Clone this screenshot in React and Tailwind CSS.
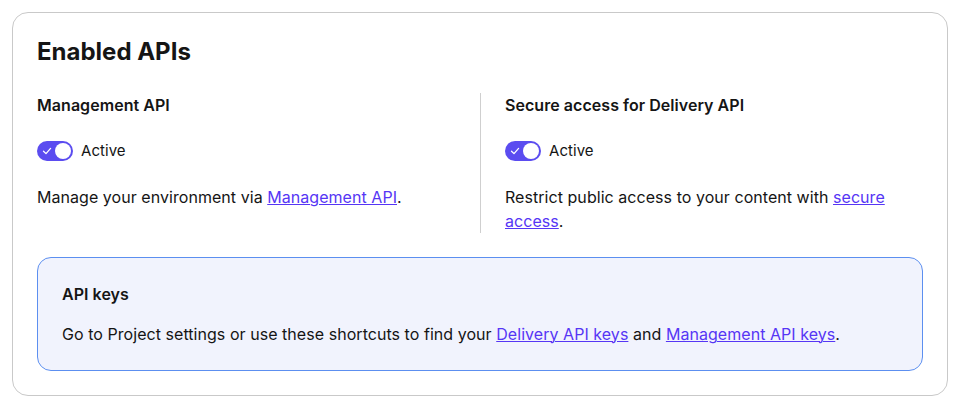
import React from 'react';

const Toggle = () => (
  <div className="relative w-9 h-5 rounded-full bg-[#5b4cf0] shrink-0">
    <svg className="absolute left-[5px] top-[5px]" width="10" height="10" viewBox="0 0 10 10" fill="none">
      <path d="M1.5 5.2 L4 7.6 L8.6 2.4" stroke="white" strokeWidth="1.3" strokeLinecap="round" strokeLinejoin="round" />
    </svg>
    <div className="absolute right-[2px] top-[2px] w-4 h-4 rounded-full bg-white" />
  </div>
);

const Link = ({ children }) => (
  <a href="#" className="text-[#5636f5] underline decoration-1">
    {children}
  </a>
);

const ApiColumn = ({ title, children, className = '' }) => (
  <div className={`flex flex-col gap-6 ${className}`}>
    <h3 className="text-base leading-6 font-semibold">{title}</h3>
    <div className="flex items-center gap-[8px] h-5">
      <Toggle />
      <span className="text-[15px] leading-5">Active</span>
    </div>
    <p className="text-base leading-6">{children}</p>
  </div>
);

export default function App() {
  return (
    <div className="bg-white p-3 w-[961px] min-h-[410px]" style={{ fontFamily: 'Inter, "Noto Sans", sans-serif' }}>
      <div className="w-[936px] border border-[#c9c9c9] rounded-2xl px-6 pt-[23px] pb-6 text-[#151515]">
        <h2 className="text-[24px] leading-8 font-bold mb-[25px]">Enabled APIs</h2>

        {/* two api columns */}
        <div className="grid grid-cols-2 tracking-[0.003em]">
          <ApiColumn title="Management API" className="pr-6">
            Manage your environment via <Link>Management API</Link>.
          </ApiColumn>
          <ApiColumn title="Secure access for Delivery API" className="border-l border-[#cfcfcf] pl-6">
            Restrict public access to your content with <Link>secure access</Link>.
          </ApiColumn>
        </div>

        {/* api keys */}
        <div className="mt-6 rounded-[14px] border border-[#5c8ff0] bg-[#f1f3fd] p-6 flex flex-col gap-4 tracking-[0.003em]">
          <h3 className="text-base leading-6 font-semibold">API keys</h3>
          <p className="text-base leading-6">
            Go to Project settings or use these shortcuts to find your <Link>Delivery API keys</Link> and{' '}
            <Link>Management API keys</Link>.
          </p>
        </div>
      </div>
    </div>
  );
}
